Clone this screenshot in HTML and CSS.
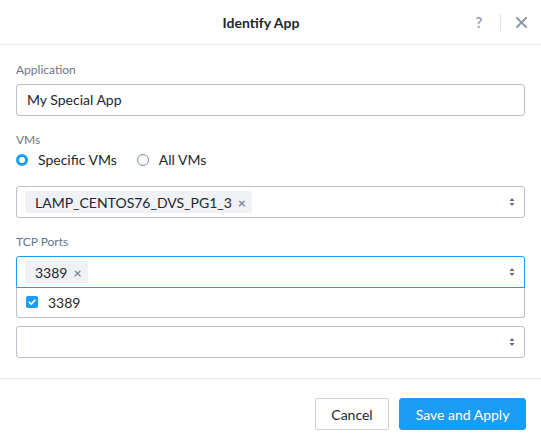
FILE: index.html
```html
<!DOCTYPE html>
<html>
<head>
<meta charset="utf-8">
<link rel="stylesheet" href="styles.css">
</head>
<body>
<div class="modal">
  <header class="head">
    <div class="title">Identify App</div>
    <div class="tools">
      <span class="help">?</span>
      <span class="sep"></span>
      <svg class="close" width="11" height="11" viewBox="0 0 11 11"><path d="M1 1L10 10M10 1L1 10" stroke="#8a97a6" stroke-width="1.8" stroke-linecap="round"/></svg>
    </div>
  </header>
  <main class="content">
    <div class="field">
      <div class="label">Application</div>
      <div class="input">My Special App</div>
    </div>
    <div class="field">
      <div class="label">VMs</div>
      <div class="radios">
        <span class="radio"><span class="dot on"></span>Specific VMs</span>
        <span class="radio"><span class="dot"></span>All VMs</span>
      </div>
      <div class="select">
        <span class="tag">LAMP_CENTOS76_DVS_PG1_3<span class="x">×</span></span>
        <svg class="caret" width="6" height="10" viewBox="0 0 6 10"><path d="M3 1L5.5 4H0.5Z M3 9L5.5 6H0.5Z" fill="#5f6c7b"/></svg>
      </div>
    </div>
    <div class="field">
      <div class="label">TCP Ports</div>
      <div class="select focus">
        <span class="tag">3389<span class="x">×</span></span>
        <svg class="caret" width="6" height="10" viewBox="0 0 6 10"><path d="M3 1L5.5 4H0.5Z M3 9L5.5 6H0.5Z" fill="#5f6c7b"/></svg>
      </div>
      <div class="menu">
        <div class="opt">
          <svg class="check" width="12" height="12" viewBox="0 0 12 12"><rect width="12" height="12" rx="2" fill="#1b9cf5"/><path d="M3.3 6.2L5.2 8.1L8.8 4.2" stroke="#fff" stroke-width="1.6" fill="none" stroke-linecap="round" stroke-linejoin="round"/></svg>
          <span>3389</span>
        </div>
      </div>
      <div class="select next">
        <svg class="caret" width="6" height="10" viewBox="0 0 6 10"><path d="M3 1L5.5 4H0.5Z M3 9L5.5 6H0.5Z" fill="#5f6c7b"/></svg>
      </div>
    </div>
  </main>
  <footer class="foot">
    <button class="btn">Cancel</button>
    <button class="btn primary">Save and Apply</button>
  </footer>
</div>
</body>
</html>
```
FILE: styles.css
```css
* { box-sizing: border-box; }
html, body { margin: 0; padding: 0; background: #fff; }
body { font-family: Lato, "Open Sans", sans-serif; color: #22272e; font-size: 14px; }
.modal { width: 541px; height: 448px; display: flex; flex-direction: column; }
.head { height: 45px; border-bottom: 1px solid #e7eaed; display: flex; align-items: center; padding: 0 14px 0 0; }
.title { flex: 1; text-align: center; font-weight: 700; font-size: 14px; padding-left: 48px; color: #22272e; }
.tools { display: flex; align-items: center; }
.help { color: #97a3b0; font-size: 15px; font-weight: 700; width: 10px; text-align: center; }
.sep { width: 1px; height: 17px; background: #dfe3e7; margin: 0 15px 0 16px; }
.close { display: block; }
.content { padding: 17px 16px 20px; flex: 1; }
.field { margin-bottom: 16px; }
.field:last-child { margin-bottom: 0; }
.label { font-size: 12px; line-height: 16px; color: #66768a; margin-bottom: 6px; }
.input { height: 32px; border: 1px solid #b8c0c9; border-radius: 3px; padding: 0 10px; line-height: 30px; font-size: 14px; }
.radios { display: flex; gap: 20px; line-height: 16px; margin: -2px 0 18px; }
.radio { display: flex; align-items: center; gap: 10px; }
.dot { width: 12px; height: 12px; border-radius: 50%; border: 1px solid #7d8a98; display: inline-block; }
.dot.on { border: 3.5px solid #1b9cf5; background: #fff; }
.select { height: 32px; border: 1px solid #b8c0c9; border-radius: 3px; display: flex; align-items: center; padding: 0 9px 0 8px; }
.select .caret { margin-left: auto; }
.select.focus { border-color: #1b9cf5; border-radius: 3px 3px 0 0; position: relative; z-index: 1; }
.select.next { margin-top: 8px; }
.tag { height: 22px; background: #eff1f4; border-radius: 3px; display: inline-flex; align-items: center; padding: 0 6px 0 10px; font-size: 14px; }
.x { color: #7d8a98; font-size: 14px; font-weight: 700; margin-left: 6px; }
.menu { margin-top: -1px; border: 1px solid #b8c0c9; border-top: none; border-radius: 0 0 3px 3px; height: 31px; }
.opt { display: flex; align-items: center; height: 30px; padding-left: 9px; gap: 10px; font-size: 14px; }
.check { display: block; }
.foot { border-top: 1px solid #e7eaed; padding: 19px 15px 0; display: flex; justify-content: flex-end; gap: 10px; height: 70px; }
.btn { font-family: inherit; font-size: 14px; height: 32px; border-radius: 3px; border: 1px solid #c9d0d7; background: #fff; color: #22272e; width: 74px; padding: 0; cursor: pointer; }
.btn.primary { background: #1b9cf5; border-color: #1b9cf5; color: #fff; width: 127px; }
```
